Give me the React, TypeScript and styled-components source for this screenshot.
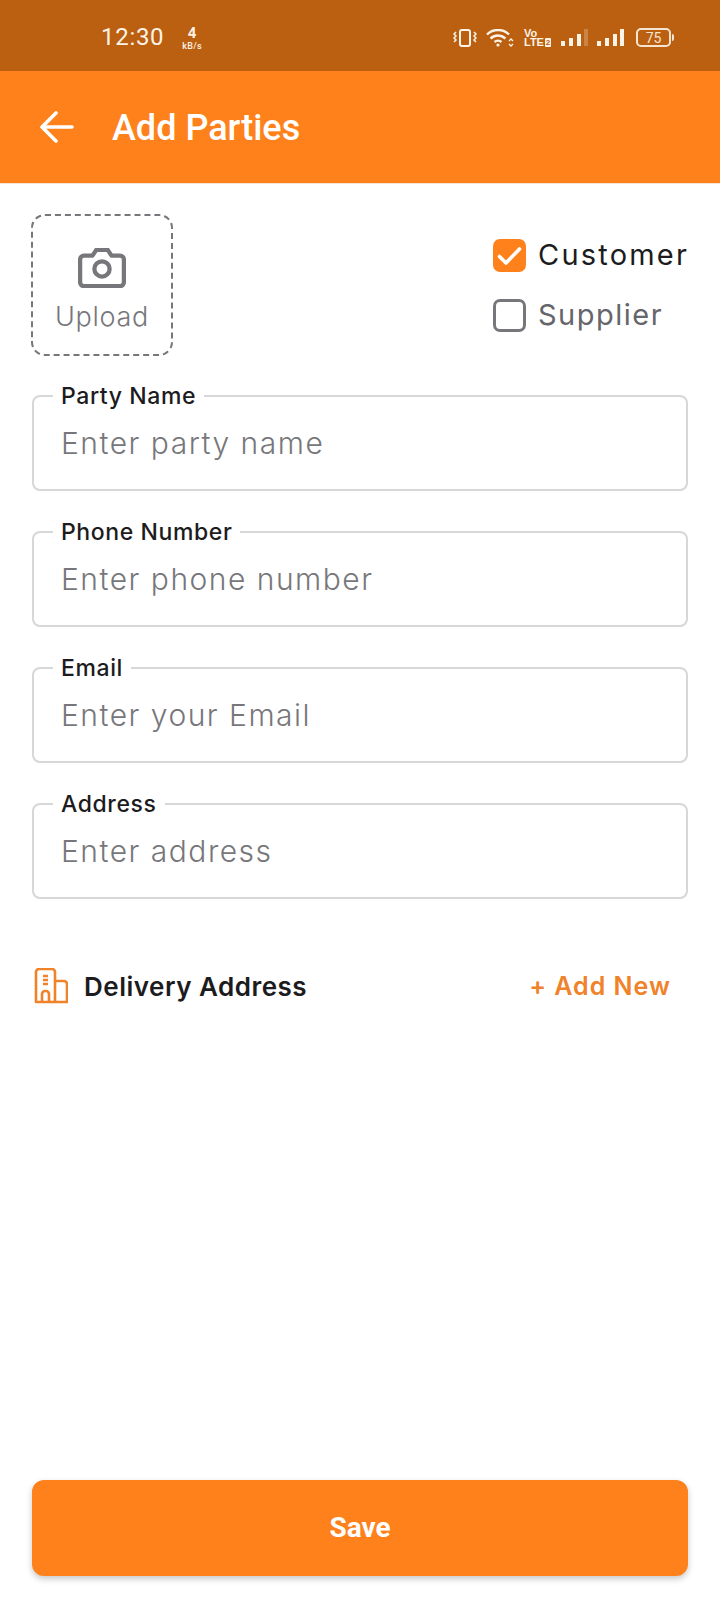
import React from "react";
import styled, { createGlobalStyle } from "styled-components";

const ORANGE = "#fe811b";
const FONT = `Inter, "Open Sans", "Noto Sans", sans-serif`;

const Global = createGlobalStyle`
  html, body { margin: 0; padding: 0; background: #fff; }
  * { box-sizing: border-box; }
`;

const Page = styled.div`
  width: 720px;
  height: 1600px;
  display: flex;
  flex-direction: column;
  background: #fff;
  font-family: ${FONT};
`;

const StatusBar = styled.div`
  height: 71px;
  flex: none;
  background: #bb5f11;
  color: #fdf3e6;
  display: flex;
  align-items: center;
  padding: 3px 49px 0 101px;
`;

const Clock = styled.span`
  font: 400 24px Roboto, sans-serif;
  letter-spacing: 0.7px;
  line-height: 28px;
`;

const Speed = styled.div`
  margin-left: 18px;
  display: flex;
  flex-direction: column;
  align-items: center;
  font-family: Roboto, sans-serif;
  padding-top: 2px;
`;

const SpeedValue = styled.span`
  font-size: 15px;
  font-weight: 700;
  line-height: 15px;
`;

const SpeedUnit = styled.span`
  margin-top: 1px;
  font-size: 9px;
  line-height: 9px;
  letter-spacing: 0.3px;
  font-weight: 500;
`;

const StatusIcons = styled.div`
  margin-left: auto;
  display: flex;
  align-items: center;
  gap: 9px;
  padding-top: 1px;
`;

const Volte = styled.div`
  width: 27px;
  display: flex;
  flex-direction: column;
  font: 700 11px/9px "Liberation Sans", sans-serif;
  margin: 0 1px;
`;

const VolteLine = styled.span`
  display: flex;
  align-items: center;
  gap: 1px;
`;

const VolteTag = styled.span`
  font-size: 8px;
  line-height: 9px;
  width: 9px;
  text-align: center;
  color: #bb5f11;
  background: #fdf3e6;
  border-radius: 1px;
`;

const Battery = styled.div`
  position: relative;
  width: 35px;
  height: 19px;
  margin-left: 3px;
  border: 2px solid #f5e4cf;
  border-radius: 5px;
  display: flex;
  align-items: center;
  justify-content: center;
  font: 400 14px Roboto, sans-serif;
  color: #f5e4cf;
  &::after {
    content: "";
    position: absolute;
    right: -5px;
    top: 4px;
    width: 2px;
    height: 7px;
    background: #f5e4cf;
    border-radius: 0 2px 2px 0;
  }
`;

const Header = styled.header`
  height: 113px;
  flex: none;
  background: ${ORANGE};
  display: flex;
  align-items: center;
  padding: 0 0 1px 40px;
  gap: 38px;
  border-bottom: 1px solid #f3e5d6;
`;

const Title = styled.h1`
  margin: 3px 0 0;
  font: 500 36px Roboto, sans-serif;
  color: #fff;
`;

const Body = styled.main`
  flex: 1;
  display: flex;
  flex-direction: column;
  padding: 30px 32px 24px;
`;

const TopRow = styled.div`
  display: flex;
  justify-content: space-between;
  align-items: center;
  margin-left: -1px;
`;

const UploadBox = styled.div`
  width: 142px;
  height: 142px;
  border: 2px dashed #77777b;
  border-radius: 14px;
  display: flex;
  flex-direction: column;
  align-items: center;
  color: #77777b;
  padding-top: 32px;
  font-size: 27px;
`;

const UploadText = styled.span`
  margin-top: 12px;
  line-height: 34px;
  font-weight: 300;
  letter-spacing: 0.7px;
`;

const Checks = styled.div`
  display: flex;
  flex-direction: column;
  gap: 27px;
  padding-top: 1px;
`;

const CheckRow = styled.div`
  display: flex;
  align-items: center;
  gap: 12px;
`;

const Box = styled.span<{ $on?: boolean }>`
  width: 33px;
  height: 33px;
  border-radius: 7px;
  display: flex;
  align-items: center;
  justify-content: center;
  background: ${(p) => (p.$on ? ORANGE : "transparent")};
  border: ${(p) => (p.$on ? "none" : "3px solid #77777b")};
`;

const CheckLabel = styled.span<{ $on?: boolean }>`
  width: 150px;
  margin-top: -2px;
  font-size: 29px;
  line-height: 33px;
  font-weight: 400;
  white-space: nowrap;
  letter-spacing: ${(p) => (p.$on ? "2.2px" : "1.5px")};
  color: ${(p) => (p.$on ? "#1c1c20" : "#65656a")};
`;

const Fields = styled.div`
  display: flex;
  flex-direction: column;
  gap: 29px;
  margin-top: 28px;
`;

const Field = styled.fieldset`
  margin: 0;
  height: 107px;
  border: 2px solid #d7d7da;
  border-radius: 8px;
  padding: 0 0 0 19px;
  display: flex;
  align-items: flex-start;
`;

const Legend = styled.legend`
  padding: 0 8px;
  font-size: 23px;
  line-height: 24px;
  letter-spacing: 0.6px;
  font-weight: 500;
  color: #1c1c20;
`;

const Placeholder = styled.span`
  padding: 15px 0 0 8px;
  font-size: 30px;
  line-height: 40px;
  letter-spacing: 1.5px;
  font-weight: 300;
  color: #77777b;
`;

const DeliveryRow = styled.div`
  display: flex;
  align-items: center;
  margin-top: 69px;
  padding: 0 17px 0 2px;
`;

const DeliveryLabel = styled.span`
  margin-left: 16px;
  font-size: 26px;
  font-weight: 600;
  letter-spacing: 0.5px;
  color: #1c1c20;
`;

const AddNew = styled.span`
  margin-left: auto;
  font-size: 25px;
  font-weight: 600;
  letter-spacing: 1px;
  color: #f0822a;
`;

const SaveButton = styled.button`
  margin-top: auto;
  height: 96px;
  width: 100%;
  border: none;
  border-radius: 12px;
  background: ${ORANGE};
  color: #fff;
  font: 700 28px Roboto, sans-serif;
  padding-bottom: 3px;
  box-shadow: 0 3px 6px rgba(0, 0, 0, 0.22);
`;

const Bars = ({ dim }: { dim?: boolean }) => (
  <svg width="27" height="18" viewBox="0 0 27 18">
    <rect x="0" y="12" width="4" height="5" fill="#fdf3e6" />
    <rect x="8" y="9" width="4" height="8" fill="#fdf3e6" />
    <rect x="16" y="5" width="4" height="12" fill="#fdf3e6" />
    <rect x="23" y="0" width="4" height="17" fill="#fdf3e6" opacity={dim ? 0.25 : 1} />
  </svg>
);

const Item = ({ label, hint }: { label: string; hint: string }) => (
  <Field>
    <Legend>{label}</Legend>
    <Placeholder>{hint}</Placeholder>
  </Field>
);

export default function App() {
  return (
    <Page>
      <Global />
      <StatusBar>
        <Clock>12:30</Clock>
        <Speed>
          <SpeedValue>4</SpeedValue>
          <SpeedUnit>kB/s</SpeedUnit>
        </Speed>
        <StatusIcons>
          <svg width="24" height="18" viewBox="0 0 24 18" fill="none" stroke="#fdf3e6" strokeWidth="2">
            <rect x="7" y="1" width="10" height="16" rx="2" />
            <path d="M3 3l-2 2 2 2-2 2 2 2-2 2M21 3l2 2-2 2 2 2-2 2 2 2" strokeWidth="1.5" />
          </svg>
          <svg width="28" height="18" viewBox="0 0 28 18" fill="none" stroke="#fdf3e6" strokeWidth="2.4">
            <path d="M1 5.500C7-.5 17-.5 23 5.500M4.500 9.500c4.500-4 10.500-4 15 0M8.500 13c2-1.700 5-1.700 7 0" />
            <circle cx="12" cy="16" r="1.600" fill="#fdf3e6" stroke="none" />
            <path d="M23 12l2-2 2 2M23 15l2 2 2-2" strokeWidth="1.300" />
          </svg>
          <Volte>
            <span>Vo</span>
            <VolteLine>
              LTE
              <VolteTag>2</VolteTag>
            </VolteLine>
          </Volte>
          <Bars dim />
          <Bars />
          <Battery>75</Battery>
        </StatusIcons>
      </StatusBar>
      <Header>
        <svg width="34" height="34" viewBox="0 0 34 34" fill="none" stroke="#fff" strokeWidth="3.600" strokeLinecap="round" strokeLinejoin="round">
          <path d="M2 17h30M16 3 2 17l14 14" />
        </svg>
        <Title>Add Parties</Title>
      </Header>
      <Body>
        <TopRow>
          <UploadBox>
            <svg width="48" height="40" viewBox="0 0 50 42" fill="none" stroke="#77777b" strokeWidth="4.500" strokeLinejoin="round">
              <path d="M6 8h9l4-6h12l4 6h9a4 4 0 0 1 4 4v24a4 4 0 0 1-4 4H6a4 4 0 0 1-4-4V12a4 4 0 0 1 4-4Z" />
              <circle cx="25" cy="22" r="8" />
            </svg>
            <UploadText>Upload</UploadText>
          </UploadBox>
          <Checks>
            <CheckRow>
              <Box $on>
                <svg width="25" height="20" viewBox="0 0 25 20" fill="none" stroke="#fff" strokeWidth="3.600" strokeLinecap="round" strokeLinejoin="round">
                  <path d="M2.500 10.500 9 17 22.500 3" />
                </svg>
              </Box>
              <CheckLabel $on>Customer</CheckLabel>
            </CheckRow>
            <CheckRow>
              <Box />
              <CheckLabel>Supplier</CheckLabel>
            </CheckRow>
          </Checks>
        </TopRow>
        <Fields>
          <Item label="Party Name" hint="Enter party name" />
          <Item label="Phone Number" hint="Enter phone number" />
          <Item label="Email" hint="Enter your Email" />
          <Item label="Address" hint="Enter address" />
        </Fields>
        <DeliveryRow>
          <svg width="34" height="36" viewBox="0 0 34 36" fill="none" stroke="#f0822a" strokeWidth="2.600" strokeLinejoin="round">
            <path d="M2 34V4a3 3 0 0 1 3-3h13a3 3 0 0 1 3 3v30ZM21 13h9a3 3 0 0 1 3 3v18H21M8 34v-8a3 3 0 0 1 3-3h1a3 3 0 0 1 3 3v8" />
            <path d="M9 8h5M9 12h5M9 16h5" />
          </svg>
          <DeliveryLabel>Delivery Address</DeliveryLabel>
          <AddNew>+ Add New</AddNew>
        </DeliveryRow>
        <SaveButton>Save</SaveButton>
      </Body>
    </Page>
  );
}
